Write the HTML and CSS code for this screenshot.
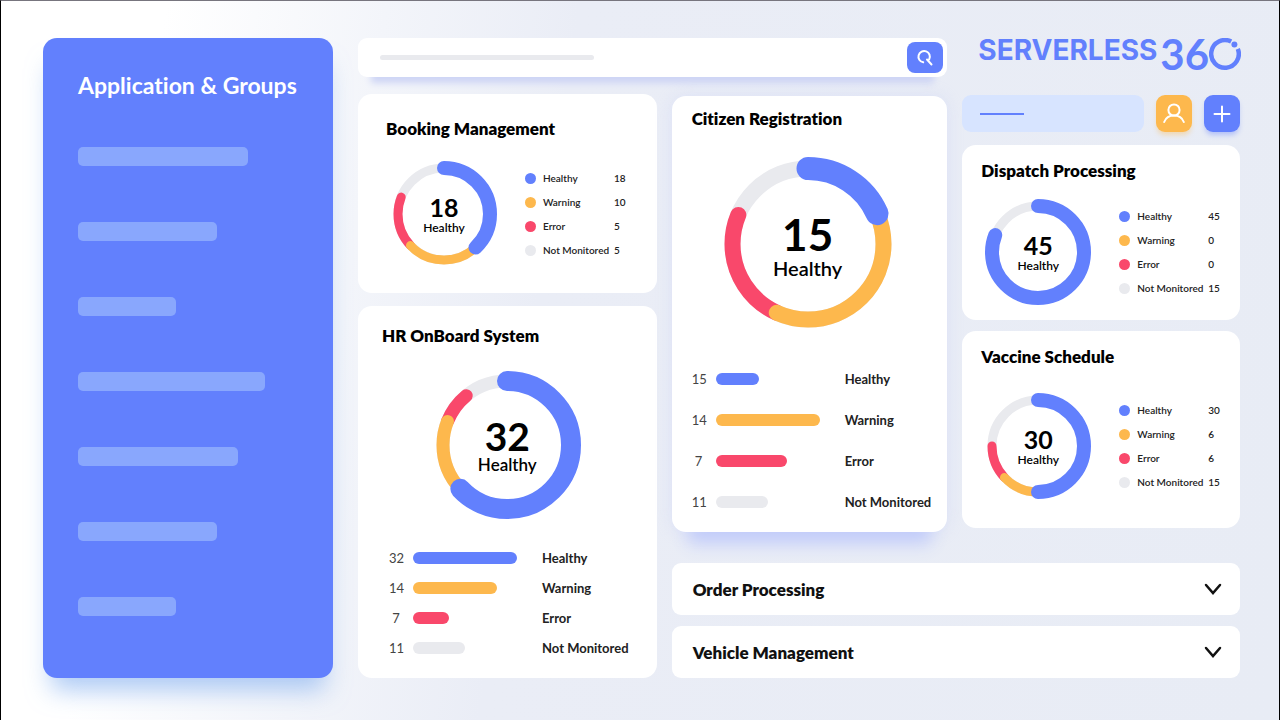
FILE: index.html
```html
<!DOCTYPE html>
<html lang="en">
<head>
<meta charset="utf-8">
<meta name="viewport" content="width=device-width, initial-scale=1">
<title>Serverless360</title>
<link rel="stylesheet" href="styles.css">
</head>
<body>
<div class="page">
  <aside class="sidebar">
    <h1 class="sidebar-title">Application &amp; Groups</h1>
    <ul class="sidebar-list">
      <li class="sidebar-item" style="width:170px"></li>
      <li class="sidebar-item" style="width:139px"></li>
      <li class="sidebar-item" style="width:98px"></li>
      <li class="sidebar-item" style="width:187px"></li>
      <li class="sidebar-item" style="width:160px"></li>
      <li class="sidebar-item" style="width:139px"></li>
      <li class="sidebar-item" style="width:98px"></li>
    </ul>
  </aside>

  <main class="board">
    <form class="search">
      <label class="search-label" for="search"><span class="search-line"></span></label>
      <input class="search-input" id="search" type="text" aria-label="Search">
      <button class="search-button" type="button" aria-label="Search">
        <svg width="20" height="20" viewBox="0 0 20 20" fill="none" stroke="#fff" stroke-width="2" stroke-linecap="round"><path d="M8.2 14.3A5.700 5.700 0 1 1 14.200 11.300M12 11.500L16.500 16.500"/></svg>
      </button>
    </form>

    <div class="column column-left">
      <section class="card booking">
        <h2 class="card-title">Booking Management</h2>
        <div class="summary">
          <div class="donut donut-small">
            <svg class="ring" viewBox="0 0 106 106">
              <circle class="track" cx="53" cy="53" r="46"/>
              <circle class="arc error" cx="53" cy="53" r="46" pathLength="100" stroke-dasharray="18 100" stroke-dashoffset="-63"/>
              <circle class="arc warning" cx="53" cy="53" r="46" pathLength="100" stroke-dasharray="25 100" stroke-dashoffset="-38"/>
              <circle class="arc healthy" cx="53" cy="53" r="46" pathLength="100" stroke-dasharray="38 100"/>
            </svg>
            <div class="donut-text"><strong class="donut-value">18</strong><span class="donut-label">Healthy</span></div>
          </div>
          <table class="legend">
            <tr><th><i class="dot healthy"></i>Healthy</th><td>18</td></tr>
            <tr><th><i class="dot warning"></i>Warning</th><td>10</td></tr>
            <tr><th><i class="dot error"></i>Error</th><td>5</td></tr>
            <tr><th><i class="dot idle"></i>Not Monitored</th><td>5</td></tr>
          </table>
        </div>
      </section>

      <section class="card hr">
        <h2 class="card-title">HR OnBoard System</h2>
        <div class="donut donut-medium">
          <svg class="ring" viewBox="0 0 148 148">
            <circle class="track" cx="74" cy="74" r="64"/>
            <circle class="arc error" cx="74" cy="74" r="64" pathLength="100" stroke-dasharray="8 100" stroke-dashoffset="-81"/>
            <circle class="arc warning" cx="74" cy="74" r="64" pathLength="100" stroke-dasharray="18 100" stroke-dashoffset="-63"/>
            <circle class="arc healthy" cx="74" cy="74" r="64" pathLength="100" stroke-dasharray="63 100"/>
          </svg>
          <div class="donut-text"><strong class="donut-value">32</strong><span class="donut-label">Healthy</span></div>
        </div>
        <ul class="bars">
          <li class="bar-row"><span class="bar-count">32</span><span class="bar-slot"><span class="bar healthy" style="width:104px"></span></span><span class="bar-name">Healthy</span></li>
          <li class="bar-row"><span class="bar-count">14</span><span class="bar-slot"><span class="bar warning" style="width:84px"></span></span><span class="bar-name">Warning</span></li>
          <li class="bar-row"><span class="bar-count">7</span><span class="bar-slot"><span class="bar error" style="width:36px"></span></span><span class="bar-name">Error</span></li>
          <li class="bar-row"><span class="bar-count">11</span><span class="bar-slot"><span class="bar idle" style="width:52px"></span></span><span class="bar-name">Not Monitored</span></li>
        </ul>
      </section>
    </div>

    <section class="card citizen">
      <h2 class="card-title">Citizen Registration</h2>
      <div class="donut donut-large">
        <svg class="ring" viewBox="0 0 174 174">
          <circle class="track" cx="87" cy="87" r="75.5"/>
          <circle class="arc error" cx="87" cy="87" r="75.5" pathLength="1000" stroke-dasharray="245 1000" stroke-dashoffset="-568"/>
          <circle class="arc warning" cx="87" cy="87" r="75.5" pathLength="1000" stroke-dasharray="384 1000" stroke-dashoffset="-184"/>
          <circle class="arc healthy" cx="87" cy="87" r="75.5" pathLength="1000" stroke-dasharray="184 1000"/>
        </svg>
        <div class="donut-text"><strong class="donut-value">15</strong><span class="donut-label">Healthy</span></div>
      </div>
      <ul class="bars">
        <li class="bar-row"><span class="bar-count">15</span><span class="bar-slot"><span class="bar healthy" style="width:43px"></span></span><span class="bar-name">Healthy</span></li>
        <li class="bar-row"><span class="bar-count">14</span><span class="bar-slot"><span class="bar warning" style="width:104px"></span></span><span class="bar-name">Warning</span></li>
        <li class="bar-row"><span class="bar-count">7</span><span class="bar-slot"><span class="bar error" style="width:71px"></span></span><span class="bar-name">Error</span></li>
        <li class="bar-row"><span class="bar-count">11</span><span class="bar-slot"><span class="bar idle" style="width:52px"></span></span><span class="bar-name">Not Monitored</span></li>
      </ul>
    </section>

    <div class="column column-right">
      <div class="logo">
        <span class="logo-word">SERVERLESS</span>
        <span class="logo-number">36</span>
        <svg class="logo-ring" width="32" height="32" viewBox="0 0 32 32" fill="none"><path d="M22.200 3.600A13.800 13.800 0 1 0 28.800 10.800" stroke="#6280fd" stroke-width="4.500"/><circle cx="25.400" cy="6.500" r="3" fill="#6280fd"/></svg>
      </div>
      <div class="actions">
        <button class="picker" type="button" aria-label="Choose a view"><span class="picker-line"></span></button>
        <button class="action account" type="button" aria-label="Account">
          <svg width="24" height="24" viewBox="0 0 24 24" fill="none" stroke="#fff" stroke-width="2" stroke-linecap="round"><circle cx="12" cy="8" r="5.600"/><path d="M2.200 20C3.800 15.800 7.500 13.600 12 13.600S20.200 15.800 21.800 20"/></svg>
        </button>
        <button class="action add" type="button" aria-label="Add">
          <svg width="18" height="18" viewBox="0 0 18 18" fill="none" stroke="#fff" stroke-width="2" stroke-linecap="round"><path d="M9 1.500V16.500M1.500 9H16.500"/></svg>
        </button>
      </div>

      <section class="card dispatch">
        <h2 class="card-title">Dispatch Processing</h2>
        <div class="summary">
          <div class="donut donut-small">
            <svg class="ring" viewBox="0 0 106 106">
              <circle class="track" cx="53" cy="53" r="46"/>
              <circle class="arc healthy" cx="53" cy="53" r="46" pathLength="100" stroke-dasharray="81 100"/>
            </svg>
            <div class="donut-text"><strong class="donut-value">45</strong><span class="donut-label">Healthy</span></div>
          </div>
          <table class="legend">
            <tr><th><i class="dot healthy"></i>Healthy</th><td>45</td></tr>
            <tr><th><i class="dot warning"></i>Warning</th><td>0</td></tr>
            <tr><th><i class="dot error"></i>Error</th><td>0</td></tr>
            <tr><th><i class="dot idle"></i>Not Monitored</th><td>15</td></tr>
          </table>
        </div>
      </section>

      <section class="card vaccine">
        <h2 class="card-title">Vaccine Schedule</h2>
        <div class="summary">
          <div class="donut donut-small">
            <svg class="ring" viewBox="0 0 106 106">
              <circle class="track" cx="53" cy="53" r="46"/>
              <circle class="arc error" cx="53" cy="53" r="46" pathLength="100" stroke-dasharray="12 100" stroke-dashoffset="-63"/>
              <circle class="arc warning" cx="53" cy="53" r="46" pathLength="100" stroke-dasharray="13 100" stroke-dashoffset="-50"/>
              <circle class="arc healthy" cx="53" cy="53" r="46" pathLength="100" stroke-dasharray="50 100"/>
            </svg>
            <div class="donut-text"><strong class="donut-value">30</strong><span class="donut-label">Healthy</span></div>
          </div>
          <table class="legend">
            <tr><th><i class="dot healthy"></i>Healthy</th><td>30</td></tr>
            <tr><th><i class="dot warning"></i>Warning</th><td>6</td></tr>
            <tr><th><i class="dot error"></i>Error</th><td>6</td></tr>
            <tr><th><i class="dot idle"></i>Not Monitored</th><td>15</td></tr>
          </table>
        </div>
      </section>
    </div>

    <div class="accordions">
      <button class="accordion" type="button" aria-expanded="false">Order Processing
        <svg width="18" height="12" viewBox="0 0 18 12" fill="none" stroke="#111" stroke-width="2.500" stroke-linecap="round"><path d="M2 2L9 10L16 2"/></svg>
      </button>
      <button class="accordion" type="button" aria-expanded="false">Vehicle Management
        <svg width="18" height="12" viewBox="0 0 18 12" fill="none" stroke="#111" stroke-width="2.500" stroke-linecap="round"><path d="M2 2L9 10L16 2"/></svg>
      </button>
    </div>
  </main>
</div>
</body>
</html>
```

FILE: styles.css
```css
:root {
  --blue: #6280fd;
  --orange: #fdb84d;
  --red: #f9486b;
  --grey: #e9eaee;
}

* { box-sizing: border-box; }

body {
  margin: 0;
  font-family: Lato, "Noto Sans", sans-serif;
  font-weight: 600;
  font-variant-ligatures: none;
  color: #222;
}

h1, h2, ul { margin: 0; padding: 0; list-style: none; }

button { border: 0; padding: 0; font: inherit; color: inherit; cursor: pointer; }

.page {
  display: flex;
  gap: 25px;
  min-height: 100vh;
  padding: 37px 39px 42px 42px;
  border: solid #000;
  border-width: 1px 1px 0 1px;
  border-top-color: #77757e;
  background: linear-gradient(98deg, #fff 12%, #f3f5fa 28%, #eaedf6 42%, #e8ecf5 100%);
}

.sidebar {
  flex: 0 0 290px;
  padding: 30px 24px 30px 35px;
  border-radius: 14px;
  background: var(--blue);
  box-shadow: 0 20px 24px -8px rgba(130, 175, 240, 0.65);
}

.sidebar-title {
  margin-bottom: 45px;
  font-size: 23px;
  font-weight: 700;
  line-height: 34px;
  white-space: nowrap;
  color: #fff;
}

.sidebar-list { display: grid; gap: 56px; }

.sidebar-item { height: 19px; border-radius: 5px; background: #89a7fd; }

.board {
  flex: 1;
  min-width: 0;
  display: grid;
  grid-template-columns: minmax(0, 299fr) minmax(0, 276fr) minmax(0, 278fr);
  grid-template-rows: auto auto 1fr;
  column-gap: 15px;
  row-gap: 17px;
  align-content: start;
}

.search {
  grid-column: 1 / 3;
  display: flex;
  align-items: center;
  height: 39px;
  padding: 0 4px 0 22px;
  border-radius: 9px;
  background: #fff;
  box-shadow: 0 19px 7px -13px #cdd4f5;
}

.search-label { flex: 0 1 214px; }
.search-line { display: block; height: 5px; border-radius: 3px; background: var(--grey); }
.search-input { flex: 1; min-width: 0; border: 0; background: none; font: inherit; outline: 0; }

.search-button {
  display: grid;
  place-items: center;
  width: 36px;
  height: 31px;
  border-radius: 8px;
  background: var(--blue);
}

.column { display: flex; flex-direction: column; }
.column-left { grid-column: 1; grid-row: 2 / 4; gap: 13px; }
.column-right { grid-column: 3; grid-row: 1 / 3; }

.card { border-radius: 14px; background: #fff; }

.card-title {
  font-size: 17px;
  font-weight: 800;
  line-height: 22px;
  white-space: nowrap;
  color: #000;
}

.booking { padding: 24px 28px 26px; }
.booking .summary { margin-top: 21px; padding-left: 5px; }
.hr { flex: 1; padding: 19px 24px 15px; }
.citizen {
  margin-top: 2px;
  padding: 12px 15px 10px 20px;
  box-shadow: 0 28px 16px -16px #c3cdfa, 0 0 16px rgba(190, 200, 250, 0.3);
}
.dispatch { padding: 15px 19px; }
.dispatch .summary { margin-top: 17px; padding-left: 4px; }
.vaccine { margin-top: 11px; padding: 15px 19px 29px; }
.vaccine .summary { margin-top: 25px; padding-left: 4px; }

.summary { display: flex; align-items: center; gap: 28px; }

.donut { display: grid; flex: none; }
.ring, .donut-text { grid-area: 1 / 1; }
.ring { width: 100%; height: 100%; transform: rotate(-90deg); fill: none; }
.donut-text {
  display: flex;
  flex-direction: column;
  align-items: center;
  justify-content: center;
  color: #000;
}
.donut-value { font-weight: 700; }
.track { stroke: var(--grey); }
.arc { stroke-linecap: round; }
.arc.healthy { stroke: var(--blue); }
.arc.warning { stroke: var(--orange); }
.arc.error { stroke: var(--red); }

.donut-small { width: 106px; height: 106px; }
.donut-small circle { stroke-width: 9px; }
.donut-small .healthy { stroke-width: 14px; }
.donut-small .donut-text { padding-top: 2px; }
.donut-small .donut-value { font-size: 25px; line-height: 26px; }
.donut-small .donut-label { font-size: 12px; line-height: 16px; }

.donut-medium { width: 148px; height: 148px; margin: 24px auto 0; }
.donut-medium circle { stroke-width: 13px; }
.donut-medium .healthy { stroke-width: 20px; }
.donut-medium .donut-text { padding-top: 4px; }
.donut-medium .donut-value { font-size: 39px; line-height: 36px; }
.donut-medium .donut-label { font-size: 17px; line-height: 22px; }

.donut-large { width: 174px; height: 174px; margin: 27px 0 0 29px; }
.donut-large circle { stroke-width: 16px; }
.donut-large .healthy { stroke-width: 23px; }
.donut-large .donut-text { padding-top: 6px; }
.donut-large .donut-value { font-size: 44px; line-height: 42px; }
.donut-large .donut-label { font-size: 20px; line-height: 26px; }

.legend { border-collapse: collapse; font-size: 10px; line-height: 14px; }
.legend tr { height: 24px; }
.legend th { width: 89px; padding: 0; font-weight: 600; text-align: left; white-space: nowrap; }
.legend td { padding: 0; }

.dot {
  display: inline-block;
  width: 11px;
  height: 11px;
  margin-right: 7px;
  border-radius: 50%;
  vertical-align: -2px;
}

.dot.healthy, .bar.healthy { background: var(--blue); }
.dot.warning, .bar.warning { background: var(--orange); }
.dot.error, .bar.error { background: var(--red); }
.dot.idle, .bar.idle { background: var(--grey); }

.bars { margin-top: 24px; font-size: 13px; }
.bar-row { display: grid; grid-template-columns: 24px 129px auto; align-items: center; height: 30px; }
.hr .bars { padding-left: 7px; }
.citizen .bar-row { height: 41px; }
.citizen .bars { margin-top: 27px; }
.bar-count { width: 14px; text-align: center; font-weight: 400; color: #444; }
.bar { display: block; height: 12px; border-radius: 6px; }
.bar-name { font-weight: 700; white-space: nowrap; }

.logo { display: flex; height: 32px; padding-left: 16px; color: var(--blue); }
.logo-word { padding-right: 3px; font: 700 28px/24px Inter, sans-serif; }
.logo-number { font: 700 42px/32px Lato, sans-serif; }
.logo-ring { flex: none; }

.actions { display: flex; gap: 12px; margin: 25px 0 13px; }

.picker { flex: 1; height: 37px; padding-left: 18px; border-radius: 9px; background: #d7e4ff; }
.picker-line { display: block; width: 44px; height: 2px; background: var(--blue); }

.action { display: grid; place-items: center; width: 36px; height: 37px; border-radius: 9px; }
.account { background: var(--orange); box-shadow: 0 4px 5px -1px rgba(253, 184, 77, 0.4); }
.add { background: var(--blue); box-shadow: 0 4px 5px -1px rgba(98, 128, 253, 0.4); }

.accordions { grid-column: 2 / 4; display: grid; align-content: start; gap: 11px; padding-top: 14px; }

.accordion {
  display: flex;
  align-items: center;
  justify-content: space-between;
  height: 52px;
  padding: 0 18px 0 21px;
  border-radius: 9px;
  background: #fff;
  font-size: 17px;
  font-weight: 800;
  color: #111;
}
```
